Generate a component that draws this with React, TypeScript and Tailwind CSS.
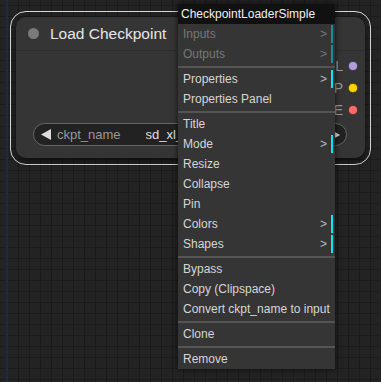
import React from 'react';

type Item =
    | { kind: 'item'; label: string; sub?: boolean; disabled?: boolean }
    | { kind: 'sep' };

const menu: Item[] = [
    { kind: 'item', label: 'Inputs', sub: true, disabled: true },
    { kind: 'item', label: 'Outputs', sub: true, disabled: true },
    { kind: 'sep' },
    { kind: 'item', label: 'Properties', sub: true },
    { kind: 'item', label: 'Properties Panel' },
    { kind: 'sep' },
    { kind: 'item', label: 'Title' },
    { kind: 'item', label: 'Mode', sub: true },
    { kind: 'item', label: 'Resize' },
    { kind: 'item', label: 'Collapse' },
    { kind: 'item', label: 'Pin' },
    { kind: 'item', label: 'Colors', sub: true },
    { kind: 'item', label: 'Shapes', sub: true },
    { kind: 'sep' },
    { kind: 'item', label: 'Bypass' },
    { kind: 'item', label: 'Copy (Clipspace)' },
    { kind: 'item', label: 'Convert ckpt_name to input' },
    { kind: 'sep' },
    { kind: 'item', label: 'Clone' },
    { kind: 'sep' },
    { kind: 'item', label: 'Remove' },
];

const outputs = [
    { name: 'MODEL', color: 'bg-[#b39ddb]' },
    { name: 'CLIP', color: 'bg-[#ffd500]' },
    { name: 'VAE', color: 'bg-[#ff6e6e]' },
];

function LoadCheckpointNode() {
    return (
        <div className="absolute left-[10px] top-[11px] w-[361px] h-[154px] rounded-[16px] border-[1.5px] border-[#d8d8d8] p-[5px]">
            <div className="w-[349px] h-[141px] rounded-[10px] bg-[#353535] shadow-[0_3px_6px_rgba(0,0,0,0.6)] flex flex-col">
                {/* title */}
                <div className="h-[34px] flex items-center border-b border-[#2e2e2e] shrink-0">
                    <div className="ml-[12px] w-[11px] h-[11px] rounded-full bg-[#7a7a7a]" />
                    <span className="ml-[11px] text-[15.5px] text-[#e6e6e6]">Load Checkpoint</span>
                </div>

                {/* outputs */}
                <div className="pt-[4px] flex flex-col">
                    {outputs.map(o => (
                        <div key={o.name} className="h-[22px] flex items-center justify-end pr-[7px] gap-[5px]">
                            <span className="text-[14px] text-[#9c9c9c]">{o.name}</span>
                            <div className={`w-[10px] h-[10px] rounded-full border border-black/60 ${o.color}`} />
                        </div>
                    ))}
                </div>

                {/* widget */}
                <div className="mt-[2px] ml-[17px] w-[314px] h-[23px] rounded-full bg-[#222] border border-[#666] flex items-center text-[13px]">
                    <svg width="10" height="11" viewBox="0 0 10 11" className="ml-[7px] shrink-0">
                        <path d="M10 0 L0 5.5 L10 11 Z" fill="#dcdcdc" />
                    </svg>
                    <span className="ml-[6px] text-[#999]">ckpt_name</span>
                    <span className="ml-[25px] flex-1 truncate text-[#e0e0e0]">sd_xl_base_1.0.safetensors</span>
                    <svg width="7" height="8" viewBox="0 0 7 8" className="ml-[4px] mr-[6px] shrink-0">
                        <path d="M0 0 L7 4 L0 8 Z" fill="#dcdcdc" />
                    </svg>
                </div>
            </div>
        </div>
    );
}

function ContextMenu() {
    return (
        <div className="absolute left-[178px] top-[4px] w-[157px] bg-[#353535] shadow-[0_0_6px_rgba(0,0,0,0.7)] text-[12px]">
            <div className="h-[20px] bg-[#111] text-[#f0f0f0] pl-[3px] flex items-center">CheckpointLoaderSimple</div>
            {menu.map((m, i) =>
                m.kind === 'sep' ? (
                    <div key={i} className="h-[5px] flex items-center">
                        <div className="w-full h-[2px] bg-[#555]" />
                    </div>
                ) : (
                    <div key={i} className="h-[20px] flex items-center pl-[5px]">
                        <span className={`flex-1 ${m.disabled ? 'text-[#777]' : 'text-[#d6d6d6]'}`}>{m.label}</span>
                        {m.sub && (
                            <>
                                <span className={`mr-[4px] ${m.disabled ? 'text-[#777]' : 'text-[#bbb]'}`}>&gt;</span>
                                <div className={`w-[2px] h-[18px] mr-[2px] ${m.disabled ? 'bg-[#1a8c94]' : 'bg-[#14e3f0]'}`} />
                            </>
                        )}
                    </div>
                )
            )}
        </div>
    );
}

export default function App() {
    return (
        <div
            className="relative w-[381px] h-[382px] overflow-hidden bg-[#232323] bg-[image:linear-gradient(#1b1b1b_1px,transparent_1px),linear-gradient(90deg,#1b1b1b_1px,transparent_1px)] bg-[size:11px_11px] bg-[position:7px_5px]"
            style={{ fontFamily: '"Liberation Sans", Arial, sans-serif' }}
        >
            {/* link line on the canvas */}
            <div className="absolute left-[6px] top-0 w-[2px] h-full bg-[#1c2b44]" />
            <LoadCheckpointNode />
            <ContextMenu />
        </div>
    );
}
